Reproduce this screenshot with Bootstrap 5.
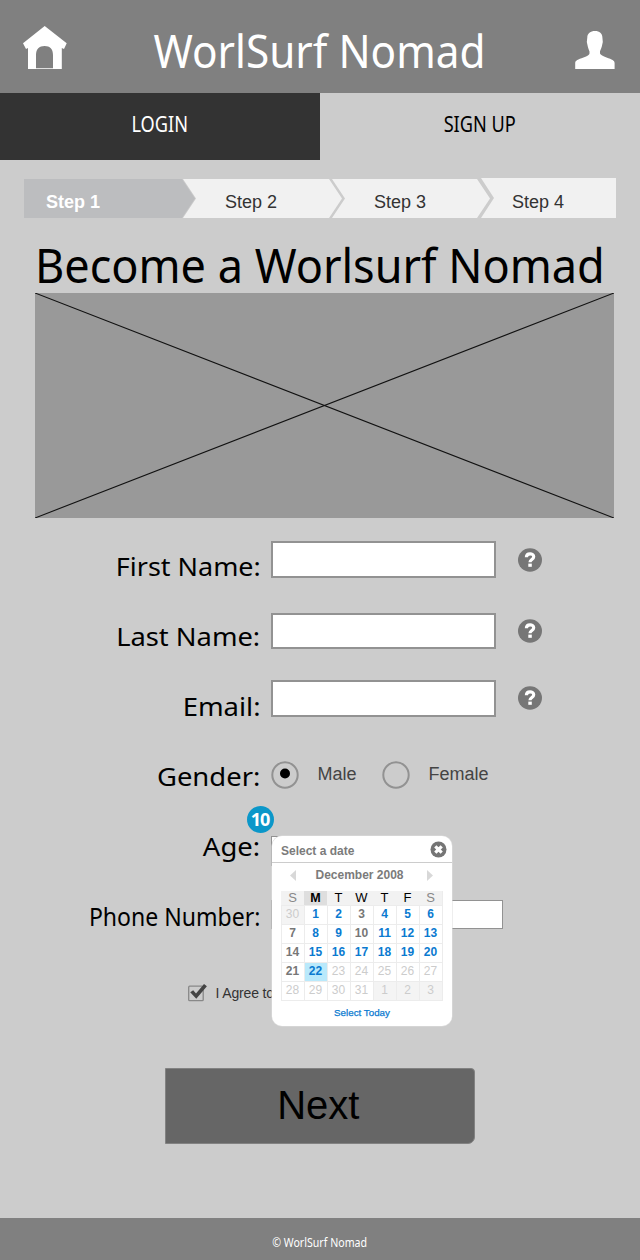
<!DOCTYPE html>
<html lang="en">
<head>
<meta charset="utf-8">
<meta name="viewport" content="width=device-width, initial-scale=1">
<title>WorlSurf Nomad</title>
<link rel="stylesheet" href="https://cdn.jsdelivr.net/npm/bootstrap@5.3.0/dist/css/bootstrap.min.css">
<style>
  body { background: #ccc; color: #000; font-family: "Liberation Sans", Arial, sans-serif; overflow-x: hidden; }
  .screen { width: 640px; height: 1260px; }
  .humanist { font-family: "Noto Sans", "Open Sans", sans-serif; white-space: nowrap; }
  .topbar { height: 93px; background: #808080; padding: 0 25px 0 23px; }
  .brand { font-size: 46px; line-height: 60px; transform: scaleX(.92); margin: 20px -18px 0 -22px; color: #fff; }
  .tab { width: 320px; height: 66.5px; font-size: 21px; line-height: 63px; text-align: center; color: #000; text-decoration: none; }
  .tab.active { background: #333; color: #fff; }
  .tab span { display: inline-block; transform: scaleX(.865); }
  .steps { margin: 18.5px 24px 0; height: 40px; }
  .step { height: 39px; margin-top: 1px; background: #f1f1f1; color: #333; font-size: 18px; line-height: 46px; white-space: nowrap;
          clip-path: polygon(0 0, calc(100% - 13px) 0, 100% 50%, calc(100% - 13px) 100%, 0 100%, 13px 50%); }
  .step-1 { width: 171px; padding-left: 22px; background: #bcbdbf; color: #fff; font-weight: bold; clip-path: polygon(0 0, 158px 0, 100% 50%, 158px 100%, 0 100%); }
  .step-2 { width: 159px; margin-left: -12px; padding-left: 42px; }
  .step-3 { width: 158px; margin-left: -10px; padding-left: 42px; }
  .step-4 { width: 135px; margin-left: -9px; padding-left: 31px; height: 40px; margin-top: 0; line-height: 48px; clip-path: polygon(0 0, 100% 0, 100% 100%, 0 100%, 13px 50%); }
  .headline { font-size: 48px; line-height: 62px; margin: 16px 0 0 34.6px; height: 59px; font-weight: 400; transform: scaleX(.938); transform-origin: left; }
  .hero { margin-left: 35px; width: 579px; height: 225px; background: #999; }
  .signup { padding-top: 13px; }
  .line { height: 70px; }
  .label-col { width: 260.5px; text-align: right; font-size: 24.5px; line-height: 72px; margin-right: 1px; }
  .label-col span { display: inline-block; transform: scaleX(var(--sx, 1.125)); transform-origin: right; }
  .field { box-sizing: border-box; width: 225px; height: 36.5px; margin-left: 9.5px; border: 2px solid #929292; border-radius: 0; background: #fff; padding: 0; }
  .help { margin-left: 22px; }
  .opt { font-size: 18px; line-height: 26px; color: #444; }
  .opt span { position: relative; top: -1px; }
  .agree { height: 26px; margin: 29px 0 0 187px; font-size: 14px; color: #333; white-space: nowrap; }
  .next { width: 310.5px; height: 76.5px; margin: 61.5px 0 0 164.5px; background: #666; border: 1px solid #828282; border-radius: 0 4px 7px 0; font-size: 40px; line-height: 71px; padding: 0 3px 0 0; color: #000; }
  .foot { height: 42px; background: #808080; color: #fff; font-size: 12px; line-height: 49px; text-align: center; }
  .foot span { display: inline-block; transform: scaleX(.885); }
  .marker { left: 246.5px; top: 288px; width: 27px; height: 27px; border-radius: 50%; background: #0b97c9; color: #fff; font: 700 18px/27px "Noto Sans", "Open Sans", sans-serif; text-align: center; letter-spacing: -1px; }
  .picker { left: 272px; top: 318px; width: 180px; height: 190px; background: #fff; border-radius: 10px; color: #7b7b7b; font-size: 12px; font-weight: bold; box-shadow: 0 0 0 .5px #ddd; }
  .picker-head { height: 27px; border-bottom: 1px solid #ccc; padding: 3px 5px 0 9px; }
  .picker-month { height: 28px; padding: 0 19px 4px 18px; }
  .picker-month span { margin-left: -4px; }
  .days { width: 162px; margin-left: 9px; display: grid; grid-template-columns: repeat(7, 1fr); grid-template-rows: 14px repeat(5, 19px); text-align: center; border-right: 1px solid #ececec; border-bottom: 1px solid #ececec; }
  .days b, .days i { font-style: normal; }
  .days b { background: #f2f2f2; color: #000; font-weight: 400; font-size: 13px; line-height: 14px; }
  .days b.we { color: #888; }
  .days b.cur { background: #dedede; font-weight: bold; font-size: 12.5px; }
  .days i { border-left: 1px solid #ececec; border-top: 1px solid #ececec; color: #0a7ad0; line-height: 17px; padding-right: 1px; }
  .days i.g { color: #777; }
  .days i.o { color: #ccc; font-weight: 400; }
  .days i.x { color: #ccc; font-weight: 400; background: #f4f4f4; }
  .days i.s { background: #b9e9fb; }
  .today { font-size: 9.8px; font-weight: 400; color: #0a7ad0; -webkit-text-stroke: .25px #0a7ad0; text-align: center; line-height: 24px; display: block; text-decoration: none; }
</style>
</head>
<body>
<div class="screen d-flex flex-column">
  <header class="topbar d-flex justify-content-between">
    <svg width="44" height="93" viewBox="23 0 44 93" class="flex-shrink-0"><path fill="#fff" d="M44.7 26 66.7 43.2 64 49 61.8 48V69H28V48L26 49 23 43.2ZM36 68.2H53V55C53 49 50 46 44.6 46S36 49 36 55Z" fill-rule="evenodd"/></svg>
    <div class="brand humanist">WorlSurf Nomad</div>
    <svg width="40" height="93" viewBox="575 0 40 93" class="flex-shrink-0"><path fill="#fff" d="M595 31C599.500 31 602.400 33.500 602.400 37.500L602.800 42 601.800 46.500C601 49 600.300 50.200 600 51.500V53.500C600.500 55 603 56 606.500 57.500 612 59.500 614.600 60.500 614.600 63V69H575.200V63C575.200 60.500 578 59.500 583.500 57.500 587.500 56 589.300 55 589.500 53.500V51.500C589 50 588.500 49 587.800 46.500L586.800 42 587.300 37.500C587.300 33.500 590.500 31 595 31Z"/></svg>
  </header>
  <nav class="d-flex humanist flex-shrink-0">
    <a class="tab active" href="#"><span>LOGIN</span></a>
    <a class="tab" href="#"><span>SIGN UP</span></a>
  </nav>
  <div class="steps d-flex flex-shrink-0">
    <div class="step step-1">Step 1</div>
    <div class="step step-2">Step 2</div>
    <div class="step step-3">Step 3</div>
    <div class="step step-4">Step 4</div>
  </div>
  <h1 class="headline humanist flex-shrink-0">Become a Worlsurf Nomad</h1>
  <svg class="hero d-block flex-shrink-0" viewBox="0 0 579 225"><path d="M0 0 579 225M579 0 0 225" stroke="#111" stroke-width="1.1"/></svg>

  <form class="signup position-relative flex-shrink-0">
    <div class="line d-flex align-items-start">
      <label class="label-col humanist"><span style="--sx:1.1">First Name:</span></label>
      <input class="field" style="margin-top:10px" aria-label="First name">
      <svg class="help" style="margin-top:16.500px" width="24" height="24"><ellipse cx="12" cy="12" rx="12" ry="11.7" fill="#767676"/><path d="M8.400 9.300C8.400 4.700 15.700 4.900 15.700 8.700 15.700 11.500 12 11.400 12 14.200" fill="none" stroke="#fff" stroke-width="3.200"/><rect x="10.300" y="15.600" width="3.500" height="3.200" fill="#fff"/></svg>
    </div>
    <div class="line d-flex align-items-start">
      <label class="label-col humanist"><span style="--sx:1.115">Last Name:</span></label>
      <input class="field" style="margin-top:11.500px" aria-label="Last name">
      <svg class="help" style="margin-top:18px" width="24" height="24"><ellipse cx="12" cy="12" rx="12" ry="11.7" fill="#767676"/><path d="M8.400 9.300C8.400 4.700 15.700 4.900 15.700 8.700 15.700 11.500 12 11.400 12 14.200" fill="none" stroke="#fff" stroke-width="3.200"/><rect x="10.300" y="15.600" width="3.500" height="3.200" fill="#fff"/></svg>
    </div>
    <div class="line d-flex align-items-start">
      <label class="label-col humanist"><span style="--sx:1.12">Email:</span></label>
      <input class="field" style="margin-top:9px" aria-label="Email">
      <svg class="help" style="margin-top:15px" width="24" height="24"><ellipse cx="12" cy="12" rx="12" ry="11.7" fill="#767676"/><path d="M8.400 9.300C8.400 4.700 15.700 4.900 15.700 8.700 15.700 11.500 12 11.400 12 14.200" fill="none" stroke="#fff" stroke-width="3.200"/><rect x="10.300" y="15.600" width="3.500" height="3.200" fill="#fff"/></svg>
    </div>
    <div class="line d-flex align-items-start">
      <label class="label-col humanist"><span style="--sx:1.12">Gender:</span></label>
      <div class="d-flex align-items-center opt" style="margin:20px 0 0 9.500px">
        <svg width="28" height="28"><circle cx="14" cy="14" r="12.700" fill="none" stroke="#929292" stroke-width="2"/><circle cx="14" cy="12.500" r="5" fill="#000"/></svg>
        <span style="margin-left:18.500px">Male</span>
        <svg width="28" height="28" style="margin-left:25px"><circle cx="14" cy="14" r="12.700" fill="none" stroke="#929292" stroke-width="2"/></svg>
        <span style="margin-left:19px">Female</span>
      </div>
    </div>
    <div class="line d-flex align-items-start">
      <label class="label-col humanist"><span style="--sx:1.12">Age:</span></label>
      <input class="field" style="margin-top:25px;width:120px;height:30px;border-width:1px" aria-label="Age">
    </div>
    <div class="line d-flex align-items-start">
      <label class="label-col humanist"><span style="--sx:.94">Phone Number:</span></label>
      <input class="field" style="margin-top:19px;width:232px;height:29px;border-width:1px" aria-label="Phone number">
    </div>
    <div class="agree d-flex align-items-center">
      <svg width="22" height="22" viewBox="0 0 22 22" class="me-2"><rect x="1.700" y="4.200" width="14.500" height="14.500" rx="1" fill="none" stroke="#888" stroke-width="1.300"/><path d="M3.200 10.200 6.200 8.300 9 11.400 17 2 19.900 4.200 9.300 16.800Z" fill="#444"/></svg>
      <span style="margin-left:-1.500px;letter-spacing:-.15px">I Agree to</span>
    </div>

    <div class="marker position-absolute">10</div>
    <div class="picker position-absolute">
      <div class="picker-head d-flex justify-content-between align-items-center">
        <span>Select a date</span>
        <svg width="17" height="17" style="margin-top:-2px"><circle cx="8.500" cy="8.500" r="8" fill="#757575"/><path d="M5.300 5.300 11.700 11.700M11.700 5.300 5.300 11.700" stroke="#fff" stroke-width="3.200"/></svg>
      </div>
      <div class="picker-month d-flex justify-content-between align-items-center">
        <svg width="6" height="11"><path d="M6 0V11L0 5.500Z" fill="#d8d8d8"/></svg>
        <span>December 2008</span>
        <svg width="6" height="11"><path d="M0 0V11L6 5.500Z" fill="#d8d8d8"/></svg>
      </div>
      <div class="days">
        <b class="we">S</b><b class="cur">M</b><b>T</b><b>W</b><b>T</b><b>F</b><b class="we">S</b>
        <i class="x">30</i><i>1</i><i>2</i><i class="g">3</i><i>4</i><i>5</i><i>6</i>
        <i class="g">7</i><i>8</i><i>9</i><i class="g">10</i><i>11</i><i>12</i><i>13</i>
        <i class="g">14</i><i>15</i><i>16</i><i>17</i><i>18</i><i>19</i><i>20</i>
        <i class="g">21</i><i class="s">22</i><i class="o">23</i><i class="o">24</i><i class="o">25</i><i class="o">26</i><i class="o">27</i>
        <i class="o">28</i><i class="o">29</i><i class="o">30</i><i class="o">31</i><i class="x">1</i><i class="x">2</i><i class="x">3</i>
      </div>
      <a class="today" href="#">Select Today</a>
    </div>
  </form>
  <button class="next flex-shrink-0" type="button">Next</button>
  <footer class="foot humanist mt-auto flex-shrink-0"><span>© WorlSurf Nomad</span></footer>
</div>
<script src="https://cdn.jsdelivr.net/npm/bootstrap@5.3.0/dist/js/bootstrap.bundle.min.js"></script>
</body>
</html>
